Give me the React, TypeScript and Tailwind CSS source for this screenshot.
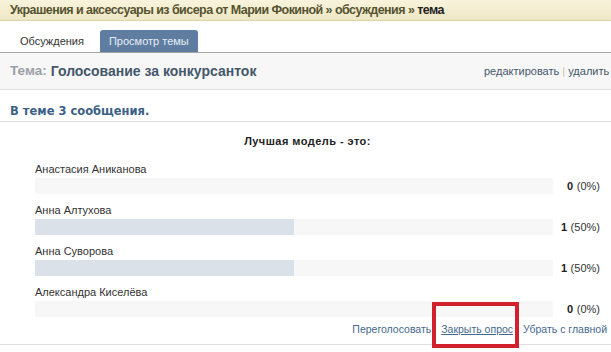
import React from "react";

const options = [
  { name: "Анастасия Аниканова", votes: 0, pct: 0 },
  { name: "Анна Алтухова", votes: 1, pct: 50 },
  { name: "Анна Суворова", votes: 1, pct: 50 },
  { name: "Александра Киселёва", votes: 0, pct: 0 },
];

export default function App() {
  return (
    <div className="w-[611px] h-[352px] overflow-hidden bg-white text-[11px] leading-[14px] text-[#333]" style={{ fontFamily: "Tahoma, 'Liberation Sans', Arial, sans-serif" }}>
      <div className="h-[21px] bg-gradient-to-b from-[#f8f3dc] to-[#efe7c4] border-b border-[#dcd3ad] pl-[10px] flex items-center">
        <span className="text-[12.5px] tracking-[-0.55px] font-bold text-[#545330] whitespace-nowrap">
          Украшения и аксессуары из бисера от Марии Фокиной » обсуждения » <span className="text-[#222]">тема</span>
        </span>
      </div>
      <div className="h-[32px] flex items-end pl-[10px] border-b border-[#a4a4a4]">
        <div className="h-[22px] px-[10px] flex items-center text-[#333] mr-[6px]">Обсуждения</div>
        <div className="h-[22px] px-[9px] flex items-center bg-[#5e7da0] text-[#e6edf5] rounded-t-[3px]">Просмотр темы</div>
      </div>
      <div className="h-[37px] bg-[#f7f7f7] border-b border-[#dedede] flex items-center pl-[10px] whitespace-nowrap w-[640px]">
        <span className="text-[13.5px] font-bold text-[#9aa0a8]">Тема:</span>
        <span className="text-[14px] font-bold text-[#45576b] ml-[4px]">Голосование за конкурсанток</span>
        <span className="ml-auto w-[156px] text-[#45576b]">редактировать <span className="text-[#c8c8a0]">|</span> удалить</span>
      </div>
      <div className="h-[32px] border-b border-[#dedede] flex items-end pb-[3px] pl-[10px]">
        <span className="font-bold text-[#3b5f86] text-[11.5px]" style={{ fontFamily: "'DejaVu Sans', Verdana, sans-serif" }}>В теме 3 сообщения.</span>
      </div>
      <div className="relative border-b border-[#dedede] h-[223px]">
        <div className="text-center font-bold text-[#222] pt-[12px] pl-[4px] tracking-[0.45px]">Лучшая модель - это:</div>
        <div className="mt-[14px] pl-[35px] pr-[10px] flex flex-col gap-[9px]">
          {options.map((o) => (
            <div key={o.name}>
              <div className="h-[14px] mb-[2px]">{o.name}</div>
              <div className="flex items-center">
                <div className="w-[518px] h-[16px] bg-[#f7f7f7]">
                  <div className="h-full bg-[#dae1e8]" style={{ width: `${o.pct}%` }} />
                </div>
                <div className="flex-1 text-right pr-[1px] text-[#333]">
                  <b className="text-[#222] tracking-[0.5px]">{o.votes}</b> ({o.pct}%)
                </div>
              </div>
            </div>
          ))}
        </div>
        <div className="absolute right-[4px] bottom-[8px] flex gap-[10px] text-[10.5px] text-[#45688e]">
          <span>Переголосовать</span>
          <span className="underline">Закрыть опрос</span>
          <span>Убрать с главной</span>
        </div>
        <div className="absolute left-[432px] top-[180px] w-[87px] h-[46px] border-[4px] border-[#d3202d]" />
      </div>
    </div>
  );
}
